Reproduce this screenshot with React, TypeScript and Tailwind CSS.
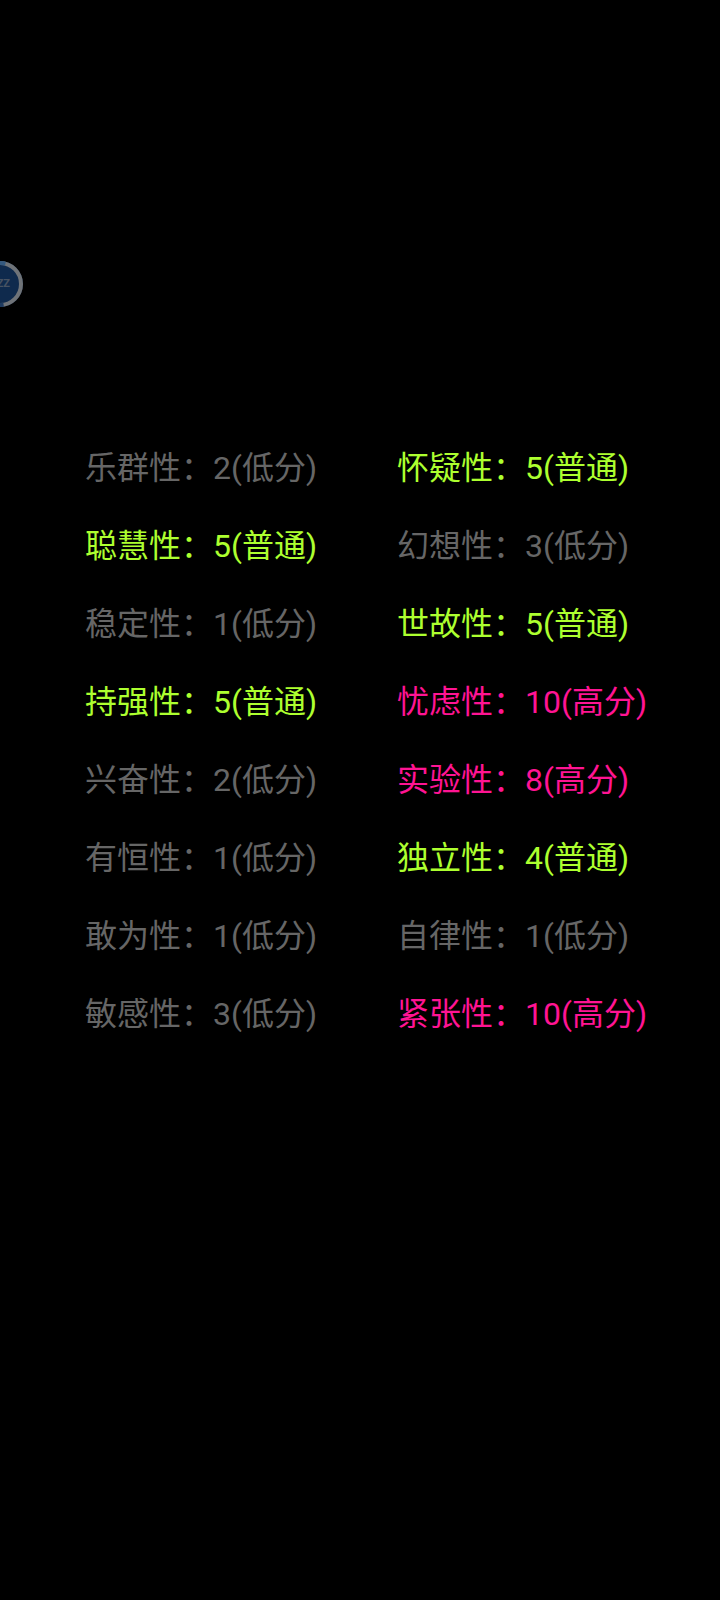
const G = "text-[#666666]";
const L = "text-[#adff2f]";
const P = "text-[#ff1493]";
const rows: [string, string, string][] = [
  ["乐群性", "2(低分)", G],
  ["怀疑性", "5(普通)", L],
  ["聪慧性", "5(普通)", L],
  ["幻想性", "3(低分)", G],
  ["稳定性", "1(低分)", G],
  ["世故性", "5(普通)", L],
  ["持强性", "5(普通)", L],
  ["忧虑性", "10(高分)", P],
  ["兴奋性", "2(低分)", G],
  ["实验性", "8(高分)", P],
  ["有恒性", "1(低分)", G],
  ["独立性", "4(普通)", L],
  ["敢为性", "1(低分)", G],
  ["自律性", "1(低分)", G],
  ["敏感性", "3(低分)", G],
  ["紧张性", "10(高分)", P],
];

export default function App() {
  return (
    <div className="relative h-[1600px] w-[720px] overflow-hidden bg-black pt-[429px] pl-[85px] font-['Roboto','Noto_Sans_CJK_SC',sans-serif]">
      <div className="absolute left-[-23px] top-[261px] flex h-[46px] w-[46px] items-center justify-center rounded-full bg-[#0f2a4d]">
        <svg viewBox="0 0 46 46" className="absolute inset-0 h-[46px] w-[46px]" fill="none" strokeWidth="4">
          <circle cx="23" cy="23" r="21" stroke="#6f7378" />
          <path d="M17 3A21 21 0 0 1 28.4 2.7" stroke="#34597f" />
          <path d="M26.6 43.7A21 21 0 0 1 17 43" stroke="#1e3a5f" />
        </svg>
        <span className="relative text-[11px] font-bold text-[#475262]">ZZZ</span>
      </div>
      <div className="grid w-[624px] grid-cols-[312px_312px] auto-rows-[78px]">
        {rows.map(([name, value, color]) => (
          <div key={name} className={`flex h-[78px] items-center whitespace-nowrap text-[32px] leading-[78px] ${color}`}>
            <span>{name}：</span>
            <span>{value}</span>
          </div>
        ))}
      </div>
    </div>
  );
}
